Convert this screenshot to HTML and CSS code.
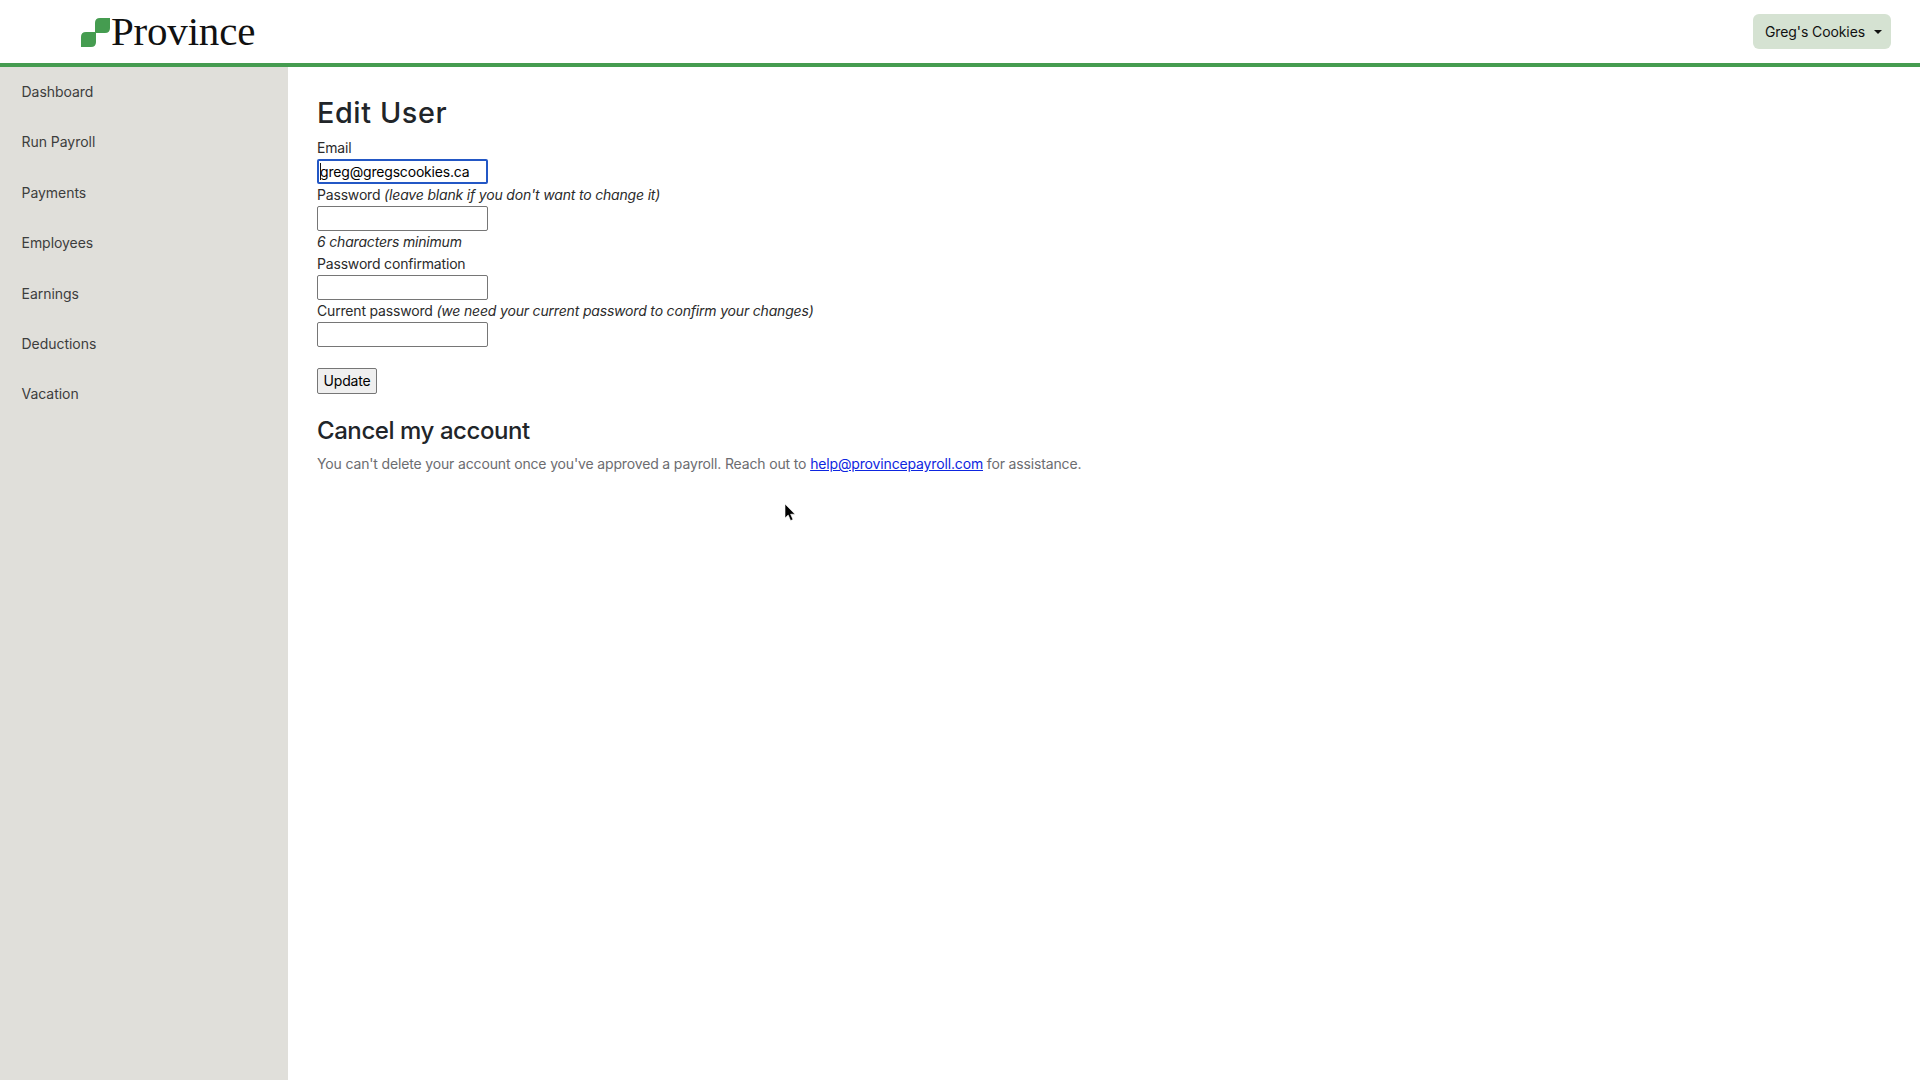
FILE: index.html
```html
<!DOCTYPE html>
<html lang="en">
<head>
<meta charset="utf-8">
<title>Edit User</title>
<link rel="stylesheet" href="styles.css">
</head>
<body>
<header class="topbar">
  <a class="brand" href="#">
    <svg class="brand-mark" viewBox="0 0 29 29" width="29" height="29" aria-hidden="true">
      <path d="M14 5 Q14 0 19 0 H29 V10 Q29 15 24 15 H14 Z" fill="#459c50"/>
      <path d="M0 19 Q0 14 5 14 H15 V24 Q15 29 10 29 H0 Z" fill="#459c50"/>
    </svg>
    <span class="brand-name">Province</span>
  </a>
  <button class="account" type="button">Greg's Cookies<span class="caret"></span></button>
</header>
<div class="layout">
  <nav class="sidebar">
    <a href="#">Dashboard</a>
    <a href="#">Run Payroll</a>
    <a href="#">Payments</a>
    <a href="#">Employees</a>
    <a href="#">Earnings</a>
    <a href="#">Deductions</a>
    <a href="#">Vacation</a>
  </nav>
  <main class="content">
    <h2 class="page-title">Edit User</h2>
    <form class="form">
      <label>Email</label>
      <span class="field-wrap">
        <input class="field focused" type="text" value="greg@gregscookies.ca">
        <span class="text-caret"></span>
      </span>
      <label>Password <i>(leave blank if you don't want to change it)</i></label>
      <input class="field" type="password">
      <i class="hint">6 characters minimum</i>
      <label>Password confirmation</label>
      <input class="field" type="password">
      <label>Current password <i>(we need your current password to confirm your changes)</i></label>
      <input class="field" type="password">
      <button class="submit" type="button">Update</button>
    </form>
    <h3 class="section-title">Cancel my account</h3>
    <p class="note">You can't delete your account once you've approved a payroll. Reach out to <a href="#">help@provincepayroll.com</a> for assistance.</p>
  </main>
</div>
<svg class="cursor" viewBox="0 0 12 18" width="12" height="18" aria-hidden="true">
  <path d="M1 0 V14 L4.2 11 L6.6 16.6 L9 15.6 L6.6 10.2 H11 Z" fill="#000" stroke="#fff" stroke-width=".6"/>
</svg>
</body>
</html>
```
FILE: styles.css
```css
* { box-sizing: border-box; }
html, body { margin: 0; height: 100%; }
body {
  font-family: Inter, "Liberation Sans", sans-serif;
  font-size: 14px;
  line-height: 1.5;
  color: #212529;
  background: #fff;
  display: flex;
  flex-direction: column;
  min-height: 1080px;
  overflow: hidden;
}
.topbar {
  height: 67px;
  flex: none;
  border-bottom: 4px solid #459c50;
  display: flex;
  align-items: center;
  justify-content: space-between;
  padding: 0 29px 0 81px;
}
.brand { display: flex; align-items: center; text-decoration: none; color: #111; }
.brand-mark { display: block; margin-top: 2px; }
.brand-name {
  font-family: "Liberation Serif", serif;
  font-size: 41px;
  line-height: 1;
  margin-left: 1px;
  margin-top: -1px;
  letter-spacing: -.2px;
}
.account {
  font: inherit;
  letter-spacing: -.1px;
  color: #111;
  background: #d5e2d2;
  border: 0;
  border-radius: 6px;
  height: 35px;
  width: 138px;
  padding: 0 0 0 12px;
  display: flex;
  align-items: center;
}
.caret {
  margin-left: 9px;
  border-top: 4px solid #111;
  border-left: 4px solid transparent;
  border-right: 4px solid transparent;
}
.layout { flex: 1; display: flex; }
.sidebar {
  width: 288px;
  flex: none;
  background: #e0dfda;
  display: flex;
  flex-direction: column;
  letter-spacing: -.04px;
}
.sidebar a {
  display: block;
  height: 50.4px;
  padding: 14px 21.5px;
  color: #3d3d3d;
  text-decoration: none;
}
.content { flex: 1; padding: 29px 0 0 29px; }
.page-title {
  margin: 0 0 6px;
  font-size: 28.8px;
  font-weight: 500;
  line-height: 1.2;
  letter-spacing: .6px;
}
.form { display: flex; flex-direction: column; align-items: flex-start; letter-spacing: -.18px; }
.form label, .hint { display: block; line-height: 22px; height: 22px; color: #2b2b2b; }
.field-wrap { position: relative; display: block; height: 25px; }
.text-caret {
  position: absolute;
  left: 3px;
  top: 4px;
  width: 1px;
  height: 17px;
  background: #111;
}
.field {
  display: block;
  width: 171px;
  height: 25px;
  padding: 1px 2px;
  font: inherit;
  letter-spacing: inherit;
  color: #000;
  background: #fff;
  border: 1px solid #767676;
  border-radius: 2px;
  outline: 0;
}
.field.focused { border: 2px solid #2357c5; padding: 0 1px; }
.submit {
  margin-top: 21px;
  height: 26px;
  width: 60px;
  padding: 0;
  font: inherit;
  letter-spacing: inherit;
  color: #000;
  background: #efefef;
  border: 1px solid #767676;
  border-radius: 2px;
}
.section-title {
  margin: 23px 0 0;
  font-size: 24px;
  font-weight: 500;
  line-height: 1.2;
  letter-spacing: -.43px;
}
.note { margin: 8px 0 0; color: #6c6c70; letter-spacing: -.15px; }
.note a { color: #0d25e0; }
.cursor { position: absolute; left: 784px; top: 504px; }
```
